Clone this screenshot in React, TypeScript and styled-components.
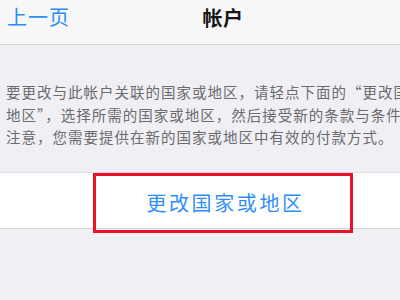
import styled, { createGlobalStyle } from "styled-components"

const GlobalStyle = createGlobalStyle`
  html, body {
    margin: 0;
    padding: 0;
    background: #efeff4;
    overflow: hidden;
  }
  body {
    font-family: "Noto Sans CJK SC", "Noto Sans", sans-serif;
  }
`

const descriptionLines = [
  "要更改与此帐户关联的国家或地区，请轻点下面的“更改国家或",
  "地区”，选择所需的国家或地区，然后接受新的条款与条件。请",
  "注意，您需要提供在新的国家或地区中有效的付款方式。",
]

export default function App() {
  return (
    <>
      <GlobalStyle />
      <Page>
        <NavBar>
          <BackButton>上一页</BackButton>
          <Title>帐户</Title>
        </NavBar>
        <Description>
          {descriptionLines.map((line) => (
            <Line key={line}>{line}</Line>
          ))}
        </Description>
        <ActionRow>
          <ActionButton>更改国家或地区</ActionButton>
          <Highlight />
        </ActionRow>
      </Page>
    </>
  )
}

const Page = styled.div`
  width: 446px;
  height: 300px;
  display: flex;
  flex-direction: column;
`

const NavBar = styled.header`
  position: relative;
  height: 44px;
  display: flex;
  align-items: center;
  justify-content: center;
  background: #f7f7f8;
  border-bottom: 1px solid #d4d4d8;
`

const BackButton = styled.span`
  position: absolute;
  left: 7px;
  top: 6px;
  font-size: 20px;
  line-height: 22px;
  color: #2c8cf4;
  letter-spacing: 1px;
`

const Title = styled.h1`
  margin: 0;
  margin-top: -10px;
  font-size: 20px;
  font-weight: 600;
  color: #161618;
  letter-spacing: 0.5px;
`

const Description = styled.div`
  padding: 36px 0 0 6px;
  color: #6b6b70;
  font-size: 14.5px;
  line-height: 22.5px;
  letter-spacing: 1px;
`

const Line = styled.div`
  white-space: nowrap;
`

const ActionRow = styled.div`
  position: relative;
  margin-top: 23px;
  height: 55px;
  display: flex;
  align-items: center;
  justify-content: center;
  background: #ffffff;
  border-top: 1px solid #dedee2;
  border-bottom: 1px solid #d4d4d8;
`

const ActionButton = styled.span`
  padding-left: 5px;
  margin-top: 4px;
  font-size: 20px;
  color: #2f8ef6;
  letter-spacing: 2.6px;
`

const Highlight = styled.div`
  position: absolute;
  left: 93px;
  top: 0;
  width: 254px;
  height: 54px;
  border: 3px solid #e8132b;
`
